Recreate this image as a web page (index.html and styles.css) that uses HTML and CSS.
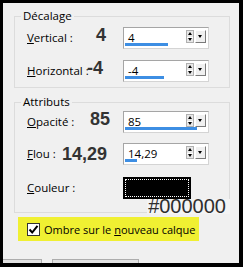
FILE: index.html
```html
<!DOCTYPE html>
<html lang="fr">
<head>
<meta charset="utf-8">
<link rel="stylesheet" href="styles.css">
</head>
<body>
<div class="panel">
  <fieldset class="group g1">
    <legend>Décalage</legend>
    <div class="row r1">
      <div class="lblcell"><span class="lbl"><u>V</u>ertical :</span><span class="big b-v">4</span></div>
      <div class="spin"><span class="val">4</span><span class="bar" style="width:43px"></span><span class="arrows"></span><span class="drop"></span></div>
    </div>
    <div class="row r2">
      <div class="lblcell"><span class="lbl"><u>H</u>orizontal :</span><span class="big b-h">-4</span></div>
      <div class="spin"><span class="val">-4</span><span class="bar" style="width:39px"></span><span class="arrows"></span><span class="drop"></span></div>
    </div>
  </fieldset>
  <fieldset class="group g2">
    <legend>Attributs</legend>
    <div class="row r3">
      <div class="lblcell"><span class="lbl"><u>O</u>pacité :</span><span class="big b-o">85</span></div>
      <div class="spin"><span class="val">85</span><span class="bar" style="width:72px"></span><span class="arrows"></span><span class="drop"></span></div>
    </div>
    <div class="row r4">
      <div class="lblcell"><span class="lbl"><u>F</u>lou :</span><span class="big b-f">14,29</span></div>
      <div class="spin"><span class="val">14,29</span><span class="bar" style="width:12px"></span><span class="arrows"></span><span class="drop"></span></div>
    </div>
    <div class="row r5">
      <div class="lblcell"><span class="lbl"><u>C</u>ouleur :</span></div>
      <div class="swatch"><span class="focus"></span></div>
    </div>
    <div class="hex">#000000</div>
  </fieldset>
  <label class="check">
    <span class="box"><svg width="11" height="11" viewBox="0 0 11 11"><path d="M1.5 5.5 L4.2 8.5 L9.5 1.8" fill="none" stroke="#000" stroke-width="2"/></svg></span>
    <span>Ombre sur le <u>n</u>ouveau calque</span>
  </label>
  <div class="buttons">
    <span class="btn b1"></span>
    <span class="btn b2"></span>
  </div>
</div>
</body>
</html>
```

FILE: styles.css
```css
html, body {
  margin: 0;
  padding: 0;
  background: #000;
}
body {
  width: 243px;
  height: 267px;
  overflow: hidden;
  font-family: "Open Sans", "Noto Sans", sans-serif;
  font-size: 11px;
  color: #000;
}
.panel {
  margin: 3px 0 0 3px;
  width: 236px;
  height: 260px;
  background: #f0f0f0;
  overflow: hidden;
  padding-top: 5px;
  box-sizing: border-box;
}
.group {
  margin: 0 0 0 11px;
  padding: 0;
  width: 216px;
  box-sizing: border-box;
  border: 1px solid #dcdcdc;
  min-width: 0;
}
.group legend {
  margin-left: 6px;
  padding: 0 2px;
  line-height: 16px;
  font-size: 11.5px;
}
.g1 { padding-bottom: 5px; }
.g2 { margin-top: 6px; padding-bottom: 0; }
.row {
  display: grid;
  grid-template-columns: 96px 86px;
  padding-left: 12px;
  align-items: center;
  height: 22px;
}
.r1 { margin-top: 3px; }
.r2 { margin-top: 11px; }
.r3 { margin-top: 1px; }
.r4 { margin-top: 10px; }
.r5 { margin-top: 12px; }
.lblcell {
  display: grid;
  height: 22px;
  white-space: nowrap;
}
.lblcell > span { grid-area: 1 / 1; }
.lbl {
  line-height: 16px;
  align-self: center;
  font-size: 11.5px;
}
.big {
  font-family: "Liberation Sans", Arial, sans-serif;
  font-weight: bold;
  font-size: 18px;
  color: #333;
  line-height: 18px;
  align-self: start;
  margin-top: -1px;
}
.b-v { margin-left: 69px; }
.b-h { margin-left: 60px; margin-top: -1px; }
.b-o { margin-left: 63px; }
.b-f { margin-left: 35px; margin-top: 2px; }
.spin {
  position: relative;
  height: 22px;
  box-sizing: border-box;
  border: 1px solid #a5a5a5;
  border-right-color: #d4d4d4;
  border-bottom-color: #d4d4d4;
  background: #fff;
  display: flex;
  align-items: center;
}
.val {
  padding-left: 4px;
  line-height: 16px;
  flex: 1;
  font-size: 11.5px;
}
.bar {
  position: absolute;
  left: 1px;
  bottom: 2px;
  height: 3px;
  background: #3d8ee3;
}
.arrows {
  width: 8px;
  height: 13px;
  margin-right: 1px;
  margin-top: -4px;
  background:
    linear-gradient(#fff, #fff) 0 6px / 8px 1px no-repeat,
    #e8e8e8;
  border: 1px solid #b0b0b0;
  box-sizing: border-box;
  position: relative;
}
.arrows::before, .arrows::after {
  content: "";
  position: absolute;
  left: 1px;
  border-left: 2.5px solid transparent;
  border-right: 2.5px solid transparent;
}
.arrows::before { top: 1px; border-bottom: 3px solid #000; }
.arrows::after { bottom: 1px; border-top: 3px solid #000; }
.drop {
  width: 11px;
  height: 13px;
  margin-right: 2px;
  margin-top: -4px;
  background: #f0f0f0;
  border: 1px solid #fff;
  border-right-color: #7a7a7a;
  border-bottom-color: #7a7a7a;
  box-sizing: border-box;
  position: relative;
}
.drop::after {
  content: "";
  position: absolute;
  left: 2px;
  top: 4px;
  border-left: 2.5px solid transparent;
  border-right: 2.5px solid transparent;
  border-top: 3px solid #000;
}
.swatch {
  width: 68px;
  height: 22px;
  background: #000;
  box-sizing: border-box;
  padding: 2px;
}
.focus {
  display: block;
  height: 100%;
  border: 1px dotted #fff;
  box-sizing: border-box;
}
.hex {
  font-family: "Liberation Sans", Arial, sans-serif;
  font-size: 20px;
  line-height: 15px;
  height: 15px;
  color: #2e2e2e;
  background: #f4f4f4;
  width: 83px;
  margin-left: auto;
  margin-right: -1px;
  margin-bottom: -2px;
  text-align: right;
  padding-right: 4px;
  box-sizing: border-box;
  position: relative;
}
.check {
  display: flex;
  align-items: center;
  margin: 4px 0 0 15px;
  width: 181px;
  height: 24px;
  background: #f0f032;
  padding-left: 9px;
  box-sizing: border-box;
  gap: 4px;
  white-space: nowrap;
  font-size: 11px;
}
.box {
  width: 13px;
  height: 13px;
  box-sizing: border-box;
  border: 1px solid #333;
  background: #fff;
  display: flex;
  align-items: center;
  justify-content: center;
}
.box svg { display: block; }
.buttons {
  display: flex;
  margin-top: 18px;
  gap: 10px;
}
.btn {
  display: block;
  height: 24px;
  background: #e1e1e1;
  border: 1px solid #adadad;
  box-sizing: border-box;
}
.b1 { width: 40px; margin-left: -1px; }
.b2 { width: 87px; }
```
